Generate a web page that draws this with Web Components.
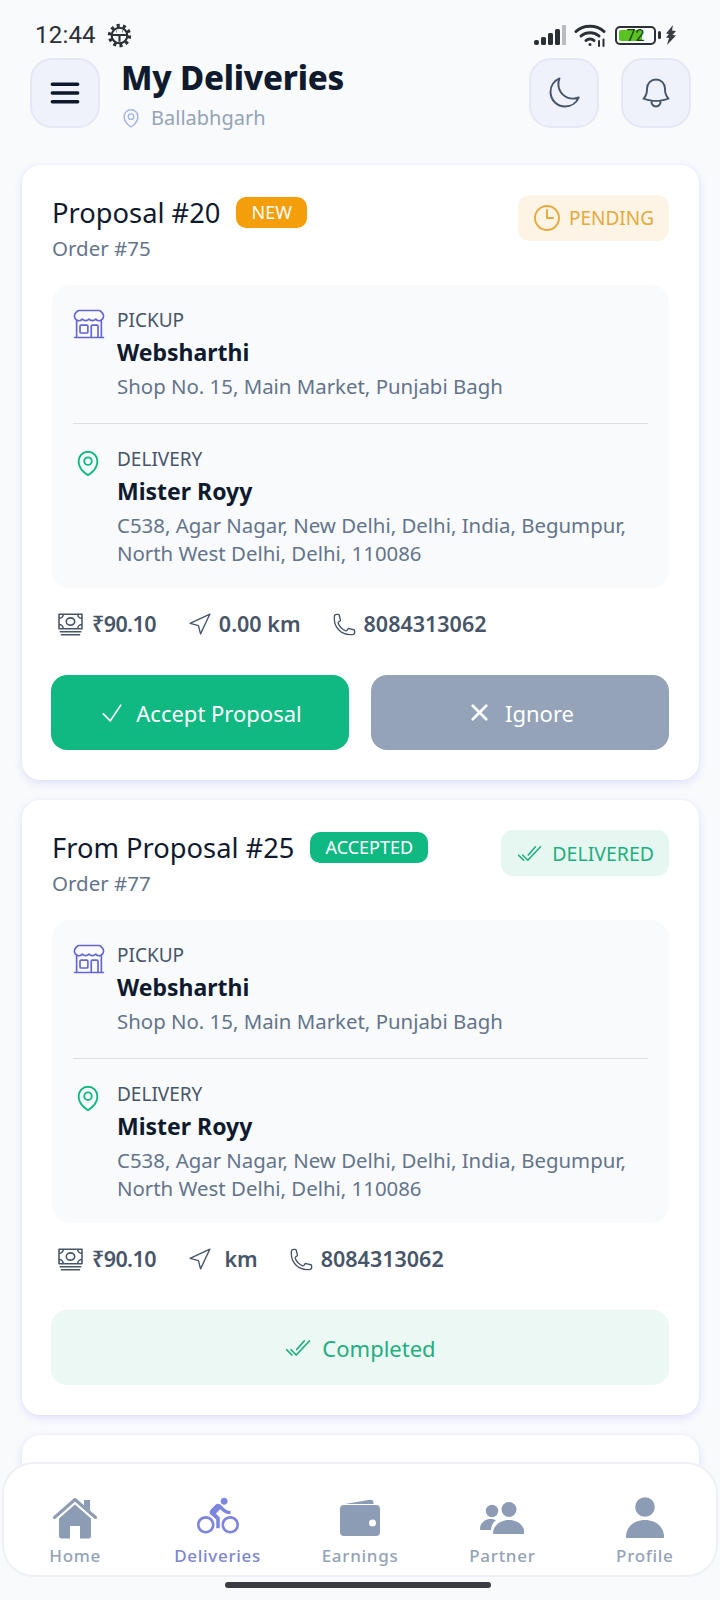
<!DOCTYPE html>
<html lang="en">
<head>
<meta charset="utf-8">
<title>My Deliveries</title>
<style>
  html, body { margin: 0; padding: 0; background: #f9fafc; }
  body { font-family: "Noto Sans", "Open Sans", sans-serif; }
</style>
</head>
<body>
<script>
  // outline icons share one wrapper, the nav ones are filled and drawn by hand
  const paths = {
    pin: '<path d="M15 10.5a3 3 0 1 1-6 0 3 3 0 0 1 6 0Z"/><path d="M19.5 10.5c0 7.142-7.5 11.25-7.5 11.25S4.5 17.642 4.5 10.5a7.5 7.5 0 1 1 15 0Z"/>',
    moon: '<path d="M21.752 15.002A9.72 9.72 0 0 1 18 15.75c-5.385 0-9.75-4.365-9.75-9.75 0-1.33.266-2.597.748-3.752A9.753 9.753 0 0 0 3 11.25C3 16.635 7.365 21 12.75 21a9.753 9.753 0 0 0 9.002-5.998Z"/>',
    bell: '<path d="M14.857 17.082a23.848 23.848 0 0 0 5.454-1.31A8.967 8.967 0 0 1 18 9.75V9A6 6 0 0 0 6 9v.75a8.967 8.967 0 0 1-2.312 6.022c1.733.64 3.56 1.085 5.455 1.31m5.714 0a24.255 24.255 0 0 1-5.714 0m5.714 0a3 3 0 1 1-5.714 0"/>',
    clock: '<path d="M12 6v6h4.5m4.5 0a9 9 0 1 1-18 0 9 9 0 0 1 18 0Z"/>',
    store: '<path d="M13.5 21v-7.5a.75.75 0 0 1 .75-.75h3a.75.75 0 0 1 .75.75V21m-4.5 0H2.36m11.14 0H18m0 0h3.64m-1.39 0V9.349M3.75 21V9.349m0 0a3.004 3.004 0 0 0 3.75-.615A2.993 2.993 0 0 0 9.75 9.75c.896 0 1.7-.393 2.25-1.016a2.993 2.993 0 0 0 2.25 1.016c.896 0 1.7-.393 2.25-1.016a3.001 3.001 0 0 0 3.75.614m-16.5 0a3.004 3.004 0 0 1-.621-4.72l1.189-1.19A1.5 1.5 0 0 1 5.378 3h13.243a1.5 1.5 0 0 1 1.06.44l1.19 1.189a3 3 0 0 1-.621 4.72M6.75 18h3.75a.75.75 0 0 0 .75-.75V13.5a.75.75 0 0 0-.75-.75H6.75a.75.75 0 0 0-.75.75v3.75c0 .414.336.75.75.75Z"/>',
    cash: '<path d="M2.5 3.5h19v12h-19zM2.5 7c2 0 3.5-1.5 3.5-3.500M21.500 7c-2 0-3.500-1.500-3.500-3.500M2.500 12c2 0 3.500 1.500 3.500 3.500M21.500 12c-2 0-3.500 1.500-3.500 3.500M15.500 9.500a3.500 3 0 1 1-7 0 3.500 3 0 0 1 7 0ZM3.500 18h17M4.500 20.500h15"/>',
    nav: '<path d="M3 11l19-9-9 19-2-8-8-2z"/>',
    phone: '<path d="M2.25 6.75c0 8.284 6.716 15 15 15h2.25a2.25 2.25 0 0 0 2.25-2.25v-1.372c0-.516-.351-.966-.852-1.091l-4.423-1.106c-.44-.11-.902.055-1.173.417l-.97 1.293c-.282.376-.769.542-1.21.38a12.035 12.035 0 0 1-7.143-7.143c-.162-.441.004-.928.38-1.21l1.293-.97c.363-.271.527-.734.417-1.173L6.963 3.102a1.125 1.125 0 0 0-1.091-.852H4.5A2.25 2.25 0 0 0 2.25 4.5v2.25Z"/>',
    check: '<path d="M4.500 12.750l6 6 9-13.500"/>',
    cross: '<path d="M6 18L18 6M6 6l12 12"/>',
    done: '<path d="M21.800 6L10.500 18l-4.500-4.500M6.800 18l-4.500-4.500M17.300 6l-6.400 7.300"/>',
    menu: '<path d="M4 6.500h16M4 12h16M4 17.500h16"/>'
  };

  class UiIcon extends HTMLElement {
    connectedCallback() {
      const size = this.getAttribute('size') || 24;
      const sw = this.getAttribute('stroke') || 1.5;
      const color = this.getAttribute('color') || 'currentColor';
      this.attachShadow({mode: 'open'}).innerHTML = `<style>
        :host { display: inline-flex; flex: none; }
        svg { display: block; }
      </style>
      <svg width="${size}" height="${size}" viewBox="0 0 24 24" fill="none" stroke="${color}" stroke-width="${sw}" stroke-linecap="round" stroke-linejoin="round">${paths[this.getAttribute('name')]}</svg>`;
    }
  }
  customElements.define('ui-icon', UiIcon);

  class StatusBar extends HTMLElement {
    constructor() {
      super();
      this.attachShadow({mode: 'open'}).innerHTML = `<style>
        :host { display: flex; align-items: center; height: 58px; padding: 12px 43px 0 35px; box-sizing: border-box; color: #2b2f36; font-family: Roboto, sans-serif; }
        .time { font-size: 24px; letter-spacing: .2px; margin-right: 11px; }
        .right { margin-left: auto; display: flex; align-items: center; gap: 8px; }
        .batt { position: relative; width: 41px; height: 19px; border: 2px solid #2b2f36; border-radius: 5px; box-sizing: border-box; }
        .fill { position: absolute; left: 2px; top: 2px; bottom: 2px; width: 62%; background: #58c322; border-radius: 2px; }
        .num { position: absolute; inset: 0; text-align: center; font-size: 16px; line-height: 15px; color: #1d3d10; }
      </style>
      <span class="time">12:44</span>
      <svg width="25" height="25" viewBox="0 0 24 24" fill="none" stroke="#2b2f36">
        <circle cx="12" cy="12" r="9.500" stroke-width="3.400" stroke-dasharray="2.900 3.070"/>
        <circle cx="12" cy="12" r="7.500" stroke-width="2"/>
        <path d="M5 11.500h14M12 11.500V18M9 8h.5M14.500 8h.5" stroke-width="2"/>
      </svg>
      <span class="right">
        <svg width="33" height="22" viewBox="0 0 33 22">
          <rect x="0" y="16" width="5" height="5" rx="2" fill="#2b2f36"/>
          <rect x="7" y="13" width="5" height="8" rx="1.500" fill="#2b2f36"/>
          <rect x="14" y="9" width="5" height="12" rx="1.500" fill="#2b2f36"/>
          <rect x="21" y="5" width="5" height="16" rx="1.500" fill="#2b2f36"/>
          <rect x="28" y="1" width="4" height="20" fill="#b9bcc1"/>
        </svg>
        <svg width="33" height="24" viewBox="0 0 33 24" fill="none" stroke="#2b2f36" stroke-width="3" stroke-linecap="round" style="margin-left:-1px">
          <path d="M2 8.500C9 1.500 23 1.500 30 8.500"/>
          <path d="M7 13c4.500-4.500 13.500-4.500 18 0"/>
          <path d="M12 17.500c2-2 6-2 8 0"/>
          <circle cx="16" cy="21.500" r="1.500" fill="#2b2f36" stroke="none"/>
          <path d="M25 18v5M29.500 16.500v6.500" stroke-width="2"/>
        </svg>
        <span class="batt"><span class="fill"></span><span class="num">72</span></span>
        <svg width="5" height="8" viewBox="0 0 5 8" style="margin-left:-6px"><rect width="3" height="8" rx="1.500" fill="#2b2f36"/></svg>
        <svg width="12" height="20" viewBox="0 0 12 20" style="margin-left:-6px"><path d="M8 0L1 8.500l3 .5-3 3.500 3 .5L2 20l9-9.500-3.500-.5L11 6 7 5.500z" fill="#3a3e45"/></svg>
      </span>`;
    }
  }
  customElements.define('status-bar', StatusBar);

  class IconButton extends HTMLElement {
    constructor() {
      super();
      this.attachShadow({mode: 'open'}).innerHTML = `<style>
        :host { display: flex; align-items: center; justify-content: center; flex: none; width: 70px; height: 70px; box-sizing: border-box; border-radius: 22px; background: #eff2fb; border: 2px solid #e5e7f4; }
      </style><slot></slot>`;
    }
  }
  customElements.define('icon-button', IconButton);

  class AppHeader extends HTMLElement {
    constructor() {
      super();
      this.attachShadow({mode: 'open'}).innerHTML = `<style>
        :host { display: flex; align-items: flex-start; gap: 21px; padding: 0 29px 0 30px; height: 70px; }
        .text { display: flex; flex-direction: column; flex: 1; }
        h1 { margin: 0; font-size: 33px; line-height: 40px; font-weight: 800; color: #0f1a2e; letter-spacing: -.2px; }
        .loc { display: flex; align-items: center; gap: 9px; margin-top: 6px; font-size: 20px; line-height: 28px; color: #94a3b8; margin-left: -1px; }
        .right { display: flex; gap: 22px; }
      </style>
      <icon-button><ui-icon name="menu" size="38" stroke="2.200" color="#0f172a"></ui-icon></icon-button>
      <div class="text">
        <h1><slot name="title"></slot></h1>
        <div class="loc"><ui-icon name="pin" size="22" stroke="1.500" color="#a5b4ea"></ui-icon><slot name="place"></slot></div>
      </div>
      <div class="right">
        <icon-button><ui-icon name="moon" size="36" stroke="1.300" color="#475569"></ui-icon></icon-button>
        <icon-button><ui-icon name="bell" size="36" stroke="1.300" color="#475569"></ui-icon></icon-button>
      </div>`;
    }
  }
  customElements.define('app-header', AppHeader);

  class StopRow extends HTMLElement {
    connectedCallback() {
      const pickup = this.getAttribute('kind') === 'pickup';
      this.attachShadow({mode: 'open'}).innerHTML = `<style>
        :host { display: grid; grid-template-columns: 30px 1fr; column-gap: 14px; }
        .ic { padding-top: 1px; }
        .ic.store { padding-top: 0; margin: -2px 0 0 -2px; }
        .label { font-size: 19px; line-height: 24px; color: #475569; }
        .name { font-size: 23px; line-height: 34px; font-weight: 700; color: #0f1a2e; margin-top: 3px; }
        .addr { font-size: 20.400px; line-height: 28px; color: #64748b; margin-top: 3px; }
      </style>
      <div class="ic ${pickup ? 'store' : ''}">${pickup
        ? '<ui-icon name="store" size="36" stroke="1.100" color="#6366d1"></ui-icon>'
        : '<ui-icon name="pin" size="30" stroke="1.500" color="#10b981"></ui-icon>'}</div>
      <div>
        <div class="label">${pickup ? 'PICKUP' : 'DELIVERY'}</div>
        <div class="name"><slot name="name"></slot></div>
        <div class="addr"><slot name="addr"></slot></div>
      </div>`;
    }
  }
  customElements.define('stop-row', StopRow);

  class StopBox extends HTMLElement {
    constructor() {
      super();
      this.attachShadow({mode: 'open'}).innerHTML = `<style>
        :host { display: block; margin-top: 23px; padding: 23px 21px 21px; background: #f8fafc; border-radius: 18px; }
        ::slotted(hr) { border: 0; height: 1px; background: #dbe0e7; margin: 23px 0 23px; }
      </style><slot></slot>`;
    }
  }
  customElements.define('stop-box', StopBox);

  class MetaItem extends HTMLElement {
    connectedCallback() {
      const icon = this.getAttribute('icon');
      this.attachShadow({mode: 'open'}).innerHTML = `<style>
        :host { display: inline-flex; align-items: center; gap: 7px; font-size: 21.500px; line-height: 30px; font-weight: 600; color: #475569; white-space: pre; ${icon === 'cash' ? 'letter-spacing: -.6px;' : ''} }
      </style>
      <ui-icon name="${icon}" size="${icon === 'cash' ? 29 : 25}" stroke="1.300" color="#475569"></ui-icon><slot></slot>`;
    }
  }
  customElements.define('meta-item', MetaItem);

  class MetaRow extends HTMLElement {
    constructor() {
      super();
      this.attachShadow({mode: 'open'}).innerHTML = `<style>
        :host { display: flex; align-items: center; gap: 31px; margin-top: 21px; padding-left: 4px; }
      </style><slot></slot>`;
    }
  }
  customElements.define('meta-row', MetaRow);

  class ActionButton extends HTMLElement {
    connectedCallback() {
      const tone = this.getAttribute('tone');
      const tones = {
        accept: 'background:#10b981;color:#fff',
        ignore: 'background:#94a3b8;color:#fff',
        done: 'background:#ebf8f4;color:#1fae7f'
      };
      const ignore = tone === 'ignore';
      this.attachShadow({mode: 'open'}).innerHTML = `<style>
        :host { display: flex; flex: 1; align-items: center; justify-content: center; gap: ${ignore ? 12 : 10}px; height: 75px; border-radius: 16px; font-size: 22px; ${tones[tone]}; }
      </style>
      <ui-icon name="${this.getAttribute('icon')}" size="${ignore ? 27 : 28}" stroke="${ignore ? 2.400 : 1.500}"></ui-icon><slot></slot>`;
    }
  }
  customElements.define('action-button', ActionButton);

  class StatusPill extends HTMLElement {
    connectedCallback() {
      const green = this.getAttribute('tone') === 'green';
      this.attachShadow({mode: 'open'}).innerHTML = `<style>
        :host { display: inline-flex; align-items: center; gap: ${green ? 9 : 6}px; flex: none; height: 46px; padding: 0 15px 0 ${green ? 15 : 13}px; box-sizing: border-box; border-radius: 12px; font-size: ${green ? 19.5 : 19}px; background: ${green ? '#e6f7f1' : '#fdf4e5'}; color: ${green ? '#1fae7f' : '#e5a93c'}; }
      </style>
      <ui-icon name="${green ? 'done' : 'clock'}" size="${green ? 27 : 32}" stroke="1.400"></ui-icon><slot></slot>`;
    }
  }
  customElements.define('status-pill', StatusPill);

  class TagBadge extends HTMLElement {
    constructor() {
      super();
      this.attachShadow({mode: 'open'}).innerHTML = `<style>
        :host { display: inline-flex; align-items: center; height: 31px; padding: 0 15px; border-radius: 10px; font-size: 18px; color: #fff; background: var(--tag, #f59e0b); margin-top: -2px; }
      </style><slot></slot>`;
    }
  }
  customElements.define('tag-badge', TagBadge);

  class DeliveryCard extends HTMLElement {
    constructor() {
      super();
      this.attachShadow({mode: 'open'}).innerHTML = `<style>
        :host { display: block; margin: 0 21px 20px 22px; padding: 30px 30px 30px; background: #fff; border-radius: 18px; box-shadow: 0 3px 8px rgba(99,102,241,.16), 0 0 2px rgba(99,102,241,.1); }
        .top { display: flex; justify-content: space-between; align-items: flex-start; }
        .head { display: flex; align-items: center; gap: 16px; }
        .title { font-size: 27.300px; line-height: 36px; color: #0f1a2e; }
        .order { font-size: 20.500px; line-height: 28px; color: #64748b; margin-top: 3px; }
        .actions { display: flex; gap: 22px; margin: 36px 0 0 -1px; }
      </style>
      <div class="top">
        <div>
          <div class="head"><span class="title"><slot name="title"></slot></span><slot name="tag"></slot></div>
          <div class="order"><slot name="order"></slot></div>
        </div>
        <slot name="status"></slot>
      </div>
      <slot name="stops"></slot>
      <slot name="meta"></slot>
      <div class="actions"><slot name="actions"></slot></div>`;
    }
  }
  customElements.define('delivery-card', DeliveryCard);

  class NavItem extends HTMLElement {
    connectedCallback() {
      const on = this.hasAttribute('active');
      this.attachShadow({mode: 'open'}).innerHTML = `<style>
        :host { display: flex; flex: 1; flex-direction: column; align-items: center; color: ${on ? '#7d86df' : '#8d9cb5'}; }
        .ic { height: 46px; display: flex; align-items: flex-end; justify-content: center; color: inherit; }
        .label { margin-top: 5px; font-size: 17px; line-height: 24px; font-weight: 500; letter-spacing: .7px; color: ${on ? '#7d86d0' : '#94a3b8'}; }
      </style>
      <div class="ic"><slot name="icon"></slot></div>
      <div class="label"><slot></slot></div>`;
    }
  }
  customElements.define('nav-item', NavItem);

  class BottomNav extends HTMLElement {
    constructor() {
      super();
      this.attachShadow({mode: 'open'}).innerHTML = `<style>
        :host { position: absolute; left: 2px; right: 2px; top: 1462px; height: 115px; box-sizing: border-box; display: flex; padding-top: 29px; background: #fff; border: 2px solid #eef0f5; border-radius: 32px; }
      </style><slot></slot>`;
    }
  }
  customElements.define('bottom-nav', BottomNav);

  class AppShell extends HTMLElement {
    constructor() {
      super();
      this.attachShadow({mode: 'open'}).innerHTML = `<style>
        :host { display: block; position: relative; width: 720px; height: 1600px; overflow: hidden; background: #f9fafc; }
        .list { margin-top: 37px; }
        .grab { position: absolute; left: 225px; width: 266px; top: 1582px; height: 6px; border-radius: 3px; background: #3a3c42; }
      </style>
      <status-bar></status-bar>
      <slot name="header"></slot>
      <div class="list"><slot></slot></div>
      <slot name="nav"></slot>
      <div class="grab"></div>`;
    }
  }
  customElements.define('app-shell', AppShell);
</script>

<app-shell>
  <app-header slot="header">
    <span slot="title">My Deliveries</span>
    <span slot="place">Ballabhgarh</span>
  </app-header>

  <delivery-card>
    <span slot="title">Proposal #20</span>
    <tag-badge slot="tag">NEW</tag-badge>
    <span slot="order">Order #75</span>
    <status-pill slot="status">PENDING</status-pill>
    <stop-box slot="stops">
      <stop-row kind="pickup">
        <span slot="name">Websharthi</span>
        <span slot="addr">Shop No. 15, Main Market, Punjabi Bagh</span>
      </stop-row>
      <hr>
      <stop-row kind="delivery">
        <span slot="name">Mister Royy</span>
        <span slot="addr">C538, Agar Nagar, New Delhi, Delhi, India, Begumpur, North West Delhi, Delhi, 110086</span>
      </stop-row>
    </stop-box>
    <meta-row slot="meta">
      <meta-item icon="cash">₹90.10</meta-item>
      <meta-item icon="nav">0.00 km</meta-item>
      <meta-item icon="phone">8084313062</meta-item>
    </meta-row>
    <action-button slot="actions" tone="accept" icon="check">Accept Proposal</action-button>
    <action-button slot="actions" tone="ignore" icon="cross">Ignore</action-button>
  </delivery-card>

  <delivery-card>
    <span slot="title">From Proposal #25</span>
    <tag-badge slot="tag" style="--tag:#10b981">ACCEPTED</tag-badge>
    <span slot="order">Order #77</span>
    <status-pill slot="status" tone="green">DELIVERED</status-pill>
    <stop-box slot="stops">
      <stop-row kind="pickup">
        <span slot="name">Websharthi</span>
        <span slot="addr">Shop No. 15, Main Market, Punjabi Bagh</span>
      </stop-row>
      <hr>
      <stop-row kind="delivery">
        <span slot="name">Mister Royy</span>
        <span slot="addr">C538, Agar Nagar, New Delhi, Delhi, India, Begumpur, North West Delhi, Delhi, 110086</span>
      </stop-row>
    </stop-box>
    <meta-row slot="meta">
      <meta-item icon="cash">₹90.10</meta-item>
      <meta-item icon="nav"> km</meta-item>
      <meta-item icon="phone">8084313062</meta-item>
    </meta-row>
    <action-button slot="actions" tone="done" icon="done">Completed</action-button>
  </delivery-card>

  <delivery-card style="height:60px"></delivery-card>

  <bottom-nav slot="nav">
    <nav-item>
      <svg slot="icon" width="44" height="42" viewBox="0 0 44 42" fill="currentColor">
        <path d="M31 3h6v11l-6-5z"/>
        <path d="M1.500 20.500L22 2.500l20.500 18" fill="none" stroke="currentColor" stroke-width="3" stroke-linecap="round" stroke-linejoin="round"/>
        <path d="M22 7.500L38 21.500V39a2.500 2.500 0 0 1-2.500 2.500H27V29h-10v12.500H8.500A2.500 2.500 0 0 1 6 39V21.500z"/>
      </svg>
      Home
    </nav-item>
    <nav-item active>
      <svg slot="icon" width="42" height="42" viewBox="0 0 24 24" fill="currentColor" style="margin-bottom:2px"><path d="M15.500 5.500c1.100 0 2-.9 2-2s-.9-2-2-2-2 .9-2 2 .9 2 2 2zM5 12c-2.800 0-5 2.200-5 5s2.200 5 5 5 5-2.200 5-5-2.200-5-5-5zm0 8.500c-1.900 0-3.500-1.600-3.500-3.500s1.600-3.500 3.500-3.500 3.500 1.600 3.500 3.500-1.600 3.500-3.500 3.500zm5.800-10l2.400-2.400.8.8c1.300 1.300 3 2.100 5.100 2.100V9c-1.500 0-2.700-.6-3.600-1.500l-1.900-1.900c-.5-.4-1-.6-1.600-.6s-1.100.2-1.400.6L7.800 8.400c-.4.4-.6.9-.6 1.400 0 .6.2 1.100.6 1.400L11 14v5h2v-6.200l-2.200-2.300zM19 12c-2.800 0-5 2.200-5 5s2.200 5 5 5 5-2.200 5-5-2.200-5-5-5zm0 8.500c-1.900 0-3.500-1.600-3.500-3.500s1.600-3.500 3.500-3.500 3.500 1.600 3.500 3.500-1.600 3.500-3.500 3.500z"/></svg>
      Deliveries
    </nav-item>
    <nav-item>
      <svg slot="icon" width="42" height="37" viewBox="0 0 42 37" fill="currentColor" style="margin-bottom:3px">
        <path d="M6 5L31 .8c2-.3 3.500 1 3.500 3V5z"/>
        <path fill-rule="evenodd" d="M5 6h32a4 4 0 0 1 4 4v23a4 4 0 0 1-4 4H5a4 4 0 0 1-4-4V10a4 4 0 0 1 4-4zm25 18a3.500 3.500 0 1 0 7 0 3.500 3.500 0 0 0-7 0z"/>
      </svg>
      Earnings
    </nav-item>
    <nav-item>
      <svg slot="icon" width="44" height="32" viewBox="0 0 44 32" fill="currentColor" style="margin-bottom:5px">
        <circle cx="12" cy="9" r="6.200"/>
        <circle cx="29" cy="7.500" r="7.500"/>
        <path d="M0 27c0-6 5-10 10.500-10 2.500 0 4.500.6 5.500 1.300-3 2-4.500 5-5 9.700H1a1 1 0 0 1-1-1z"/>
        <path d="M14 32c-.6 0-1-.4-1-1 0-7 7-13 16-13s15.500 6 15.500 13c0 .6-.4 1-1 1z"/>
      </svg>
      Partner
    </nav-item>
    <nav-item>
      <svg slot="icon" width="38" height="41" viewBox="0 0 38 41" fill="currentColor" style="margin-bottom:1px">
        <circle cx="19" cy="10" r="9.800"/>
        <path d="M1 41c-.6 0-1-.4-1-1 0-10 8-17 19-17s19 7 19 17c0 .6-.4 1-1 1z"/>
      </svg>
      Profile
    </nav-item>
  </bottom-nav>
</app-shell>
</body>
</html>
